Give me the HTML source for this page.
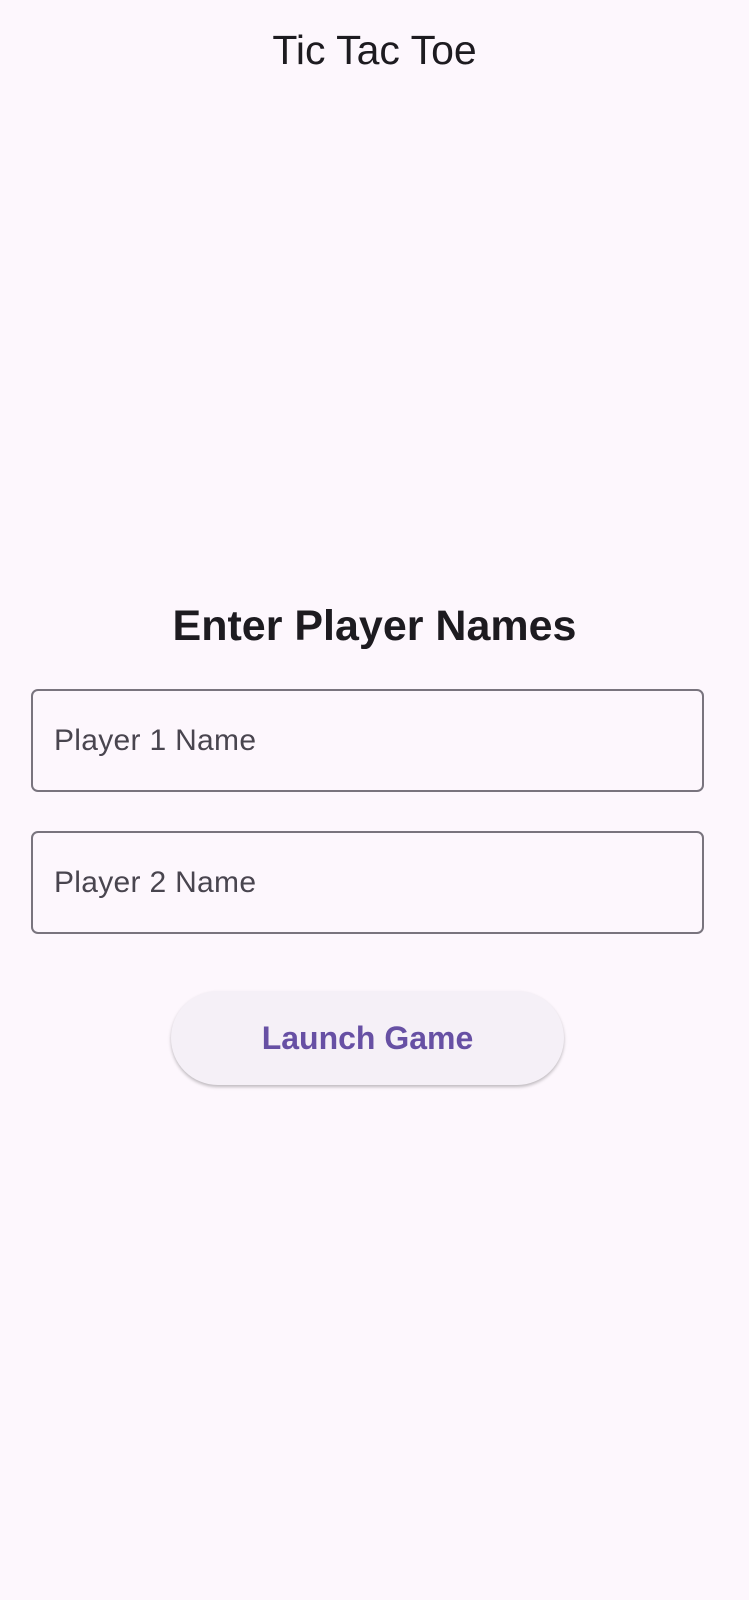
<!DOCTYPE html>
<html><head><meta charset="utf-8"><style>
html,body{margin:0;padding:0;}
body{width:749px;height:1600px;background:#fdf7fd;font-family:"Liberation Sans",sans-serif;position:relative;overflow:hidden;}
.t{position:absolute;left:0;width:749px;text-align:center;top:27px;font-size:41px;color:#1d1b20;}
.h{position:absolute;left:0;width:749px;text-align:center;top:602px;font-size:43px;font-weight:bold;color:#1d1b20;}
.in{position:absolute;left:31px;width:673px;height:103px;border:2px solid #79747e;border-radius:7px;box-sizing:border-box;}
.in span{position:absolute;left:21px;top:33px;font-size:30px;color:#49454f;letter-spacing:0.3px;}
.b{position:absolute;left:171px;top:991px;width:393px;height:94px;border-radius:47px;background:#f5f0f7;box-shadow:0 2px 3px rgba(0,0,0,0.25);text-align:center;line-height:94px;font-size:32px;font-weight:bold;color:#6750a4;}
</style></head><body>
<div class="t">Tic Tac Toe</div>
<div class="h">Enter Player Names</div>
<div class="in" style="top:689px"><span>Player 1 Name</span></div>
<div class="in" style="top:831px"><span>Player 2 Name</span></div>
<div class="b">Launch Game</div>
</body></html>
